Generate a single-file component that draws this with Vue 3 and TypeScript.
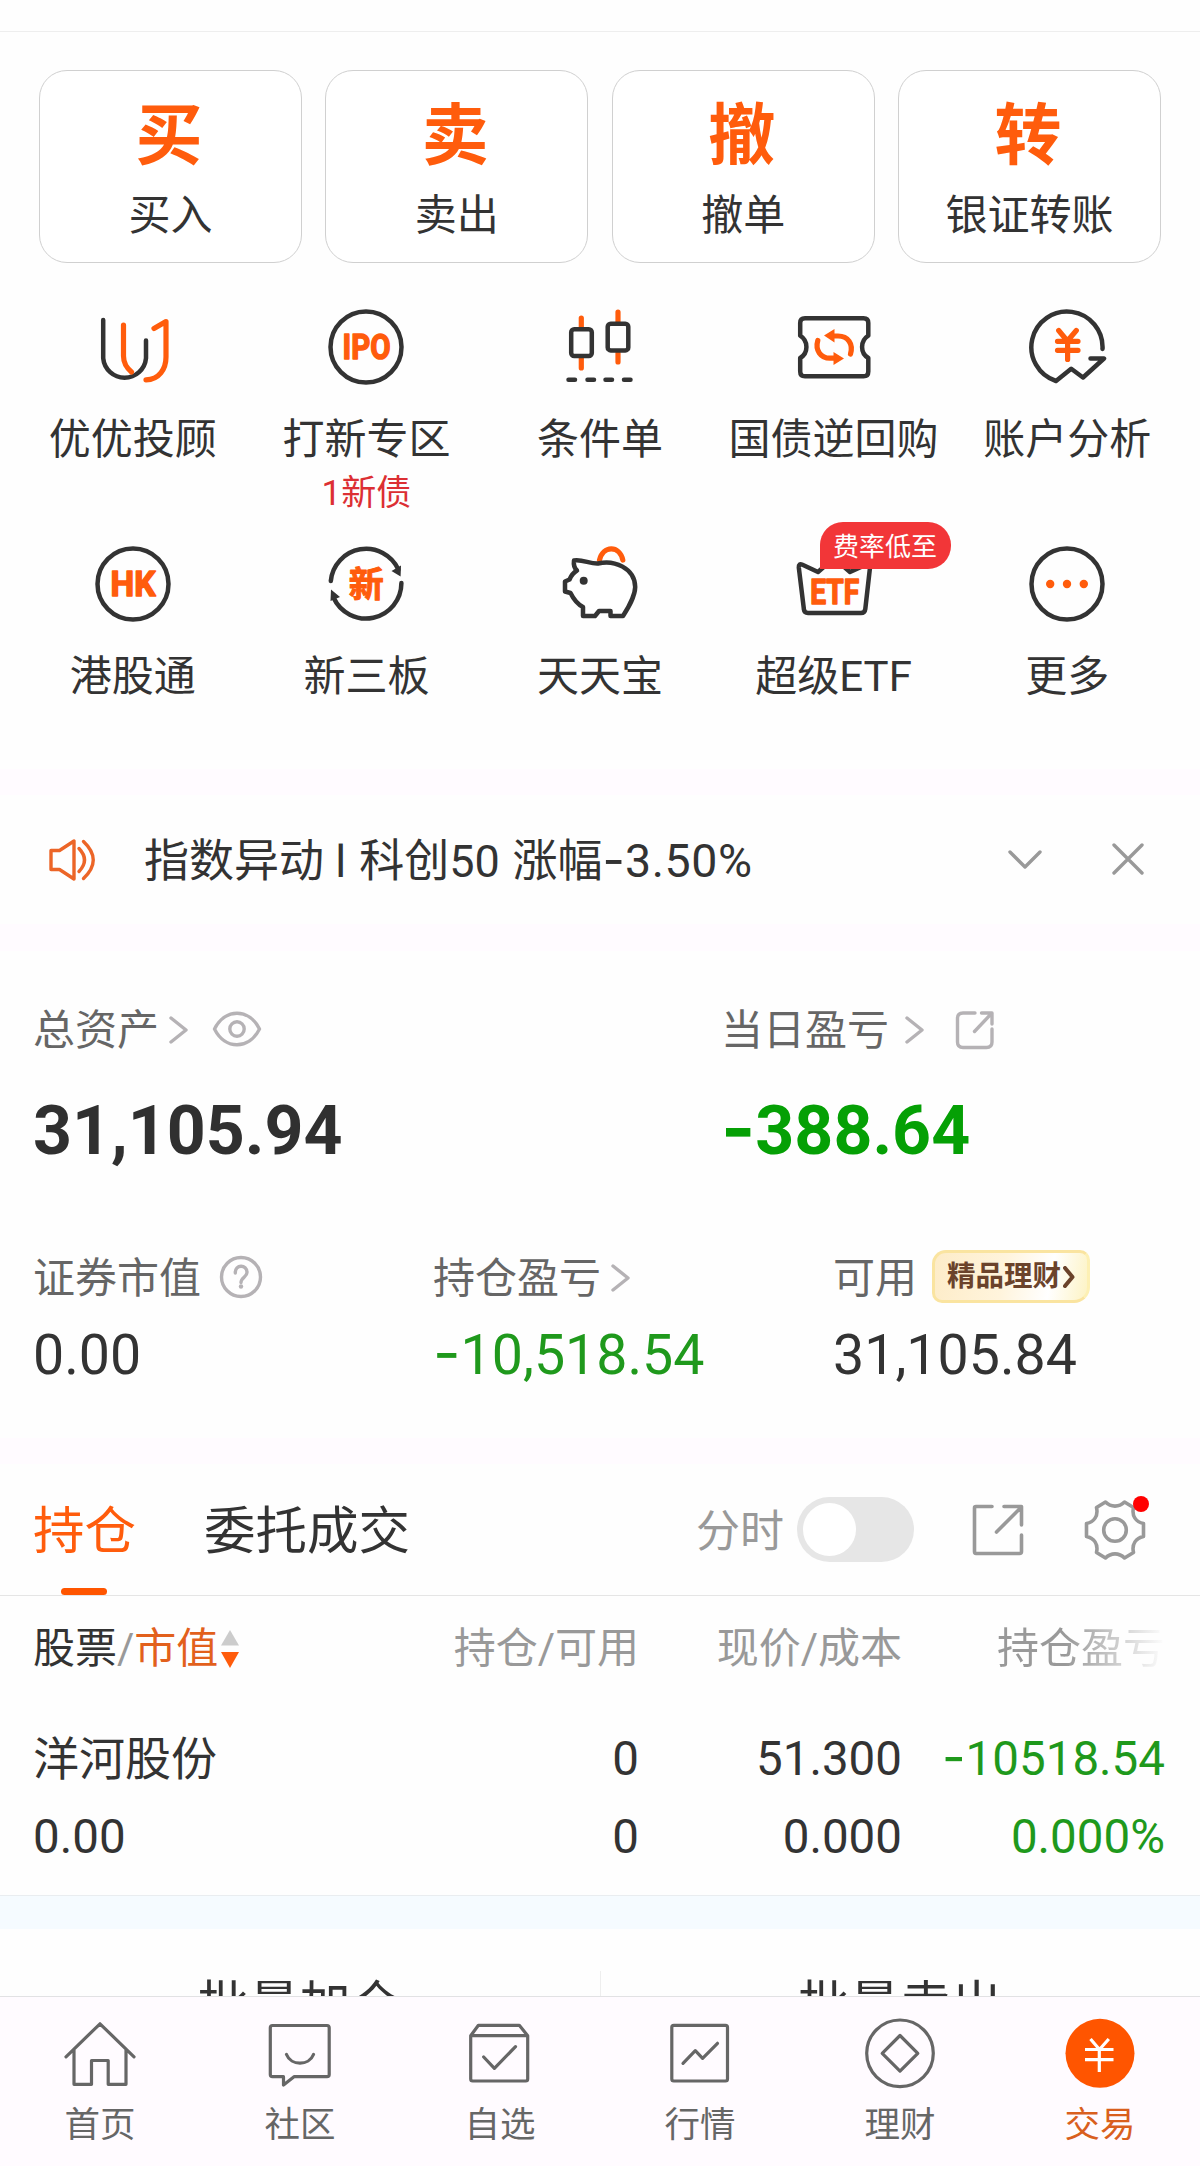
<script setup lang="ts">
interface Action { glyph: string; label: string }
interface Entry { icon: string; label: string; note?: string; badge?: string }
interface NavItem { icon: string; label: string; active?: boolean }

const actions: Action[] = [
  { glyph: '买', label: '买入' },
  { glyph: '卖', label: '卖出' },
  { glyph: '撤', label: '撤单' },
  { glyph: '转', label: '银证转账' },
]

const entries: Entry[] = [
  { icon: 'advisor', label: '优优投顾' },
  { icon: 'ipo', label: '打新专区', note: '1新债' },
  { icon: 'candle', label: '条件单' },
  { icon: 'repo', label: '国债逆回购' },
  { icon: 'analysis', label: '账户分析' },
  { icon: 'hk', label: '港股通' },
  { icon: 'neeq', label: '新三板' },
  { icon: 'pig', label: '天天宝' },
  { icon: 'etf', label: '超级ETF', badge: '费率低至' },
  { icon: 'more', label: '更多' },
]

const navItems: NavItem[] = [
  { icon: 'home', label: '首页' },
  { icon: 'community', label: '社区' },
  { icon: 'watchlist', label: '自选' },
  { icon: 'market', label: '行情' },
  { icon: 'wealth', label: '理财' },
  { icon: 'trade', label: '交易', active: true },
]
</script>

<template>
  <div class="page">
    <section class="functions">
      <div class="actions">
        <button v-for="a in actions" :key="a.label" class="action">
          <span class="action-glyph">{{ a.glyph }}</span>
          <span class="action-label">{{ a.label }}</span>
        </button>
      </div>
      <div class="entries">
        <div v-for="e in entries" :key="e.label" class="entry">
          <div class="entry-icon">
            <svg class="ico" viewBox="0 0 80 80" width="80" height="80">
              <template v-if="e.icon === 'advisor'">
                <path class="d" d="M10.2 13V51.3A21.5 21.5 0 0 0 53 51.3V33.5" />
                <path class="o" d="M30.5 18V49C30.5 57 34 61 38.5 65" />
                <path class="o" d="M53 72.8C66 72.8 73 62 73 50V14.5L61 21.5" />
              </template>
              <template v-else-if="e.icon === 'ipo'">
                <circle class="d" cx="40" cy="40" r="35.5" />
                <text class="t" x="40.500" y="52.300" textLength="48" lengthAdjust="spacingAndGlyphs">IPO</text>
              </template>
              <template v-else-if="e.icon === 'candle'">
                <path class="o" d="M21.3 11V20M21.3 51V61M58 5V15M58 46V55" />
                <rect class="d" x="11.2" y="22.3" width="20.6" height="26.7" rx="3" />
                <rect class="d" x="47.7" y="16.7" width="20.6" height="26.7" rx="3" />
                <path class="d" d="M8.5 72.7H15M27.5 72.7H34M45.5 72.7H52M64 72.7H70.5" />
              </template>
              <template v-else-if="e.icon === 'repo'">
                <path class="d" d="M11 11.3H69.5Q74.3 11.3 74.3 16V28.7C66 34 66 46 74.3 51V64.5Q74.3 69.3 69.5 69.3H11Q6.2 69.3 6.2 64.5V51C14.5 46 14.5 34 6.2 28.7V16Q6.2 11.3 11 11.3Z" />
                <path class="o" d="M56.5 47C59.5 37 54 29 44 29H38M23.8 33.5C21 43 26.5 51.2 36 51.2H42" />
                <path class="of" d="M30 28.6L40.5 22V35.4ZM50 51.5L39.5 45V58Z" />
              </template>
              <template v-else-if="e.icon === 'analysis'">
                <path class="d" d="M75.5 42A35.6 35.6 0 1 0 29 74L44.2 61.8L56 70.5L77 51.5H63.5" />
                <path class="o" d="M31.7 23.5L40.4 34L49.3 23.5M30.5 34.3H51M30.5 43.3H51M40.6 34V52.5" />
              </template>
              <template v-else-if="e.icon === 'hk'">
                <circle class="d" cx="40" cy="40" r="35.5" />
                <text class="t" x="40" y="52.300" textLength="45" lengthAdjust="spacingAndGlyphs">HK</text>
              </template>
              <template v-else-if="e.icon === 'neeq'">
                <path class="d" d="M4.8 37A35.5 35.5 0 0 1 72.4 25.5M75.4 39A35.5 35.5 0 0 1 7.5 53.5" />
                <path class="df" d="M65.5 27L75 21.5L74.6 32.5ZM5 45.5L14 53L4.5 57Z" />
                <text class="t cjk" x="40.300" y="52.5">新</text>
              </template>
              <template v-else-if="e.icon === 'pig'">
                <path class="o" d="M39.5 16C43 1.5 59.5 1 62.8 16" />
                <path class="d" fill="#fff" d="M14 16.5C22 15 30 20 38 19.5C54 15.500 75 24 75.2 43C75 53 68 64 63 72H50.500V67H39L35 72H23V63C17 60 13 54 10.500 49L5 47.500V37.500L9.500 35.500C11 32 13.500 28.500 17 26.500C14 24 13.500 20 14 16.500Z" />
                <circle class="df" cx="23.7" cy="36.7" r="4" />
              </template>
              <template v-else-if="e.icon === 'etf'">
                <path class="d" d="M9.800 64.500L4.800 23.500Q4.500 19 8.500 20.800L24 28L40 14L56 28L72 20.800Q76.500 19 76 23.500L71.300 65Q70.800 69 67 69H14Q10.300 69 9.800 65Z" />
                <text class="t" x="40.700" y="59.700" textLength="49" lengthAdjust="spacingAndGlyphs">ETF</text>
              </template>
              <template v-else>
                <circle class="d" cx="40" cy="40" r="35.5" />
                <circle class="of" cx="23.200" cy="40" r="4.200" />
                <circle class="of" cx="40" cy="40" r="4.200" />
                <circle class="of" cx="56.800" cy="40" r="4.200" />
              </template>
            </svg>
            <span v-if="e.badge" class="entry-badge">{{ e.badge }}</span>
          </div>
          <span class="entry-label">{{ e.label }}</span>
          <span v-if="e.note" class="entry-note">{{ e.note }}</span>
        </div>
      </div>
    </section>

    <section class="notice">
      <svg class="speaker" viewBox="0 0 50 44" width="50" height="44">
        <path d="M4 12.500H12.500L27 3V41L12.500 31.500H4ZM32 10.500Q43 22 32 33.500M36.500 3.500Q56 22 36.500 40.500" />
      </svg>
      <span class="notice-text">指数异动 l <span class="code">科创50</span> 涨幅<span class="minus">-</span><span class="rate">3.50%</span></span>
      <svg class="grey notice-down" viewBox="0 0 36 24" width="36" height="24"><path d="M3 4L18 19L33 4" /></svg>
      <svg class="grey notice-close" viewBox="0 0 32 32" width="32" height="32"><path d="M2 2L30 30M30 2L2 30" /></svg>
    </section>

    <section class="assets">
      <div class="assets-top">
        <div class="total">
          <div class="caption">
            <span>总资产</span>
            <svg class="light chev" viewBox="0 0 20 30" width="20" height="30"><path d="M2 3L17 15L2 27" /></svg>
            <svg class="light eye" viewBox="0 0 50 36" width="50" height="36">
              <path d="M2.500 18C13 -3 37 -3 47.500 18C37 39 13 39 2.500 18Z" />
              <circle cx="25" cy="18" r="7.200" />
            </svg>
          </div>
          <strong class="big">31,105.94</strong>
        </div>
        <div class="daily">
          <div class="caption">
            <span>当日盈亏</span>
            <svg class="light chev chev-wide" viewBox="0 0 20 30" width="20" height="30"><path d="M2 3L17 15L2 27" /></svg>
            <svg class="light share-sm" viewBox="0 0 40 40" width="40" height="40">
              <path d="M20 3H8Q2.500 3 2.500 8.500V32Q2.500 37.500 8 37.500H31.500Q37 37.500 37 32V19M19.500 21.500L36 4M26.500 3H37V14" />
            </svg>
          </div>
          <strong class="big green-strong"><span class="minus">-</span>388.64</strong>
        </div>
      </div>
      <div class="assets-bottom">
        <div class="metric">
          <div class="caption">
            <span>证券市值</span>
            <svg class="light help" viewBox="0 0 44 44" width="44" height="44">
              <circle cx="22" cy="22" r="19.500" />
              <path d="M16.300 18C16 9 28 9 28 17.500C28 22 22 22.500 22 27.500" />
              <circle class="help-dot" cx="22" cy="31.500" r="2.200" />
            </svg>
          </div>
          <span class="value">0.00</span>
        </div>
        <div class="metric">
          <div class="caption">
            <span>持仓盈亏</span>
            <svg class="light chev" viewBox="0 0 20 30" width="20" height="30"><path d="M2 3L17 15L2 27" /></svg>
          </div>
          <span class="value green"><span class="minus">-</span>10,518.54</span>
        </div>
        <div class="metric">
          <div class="caption">
            <span>可用</span>
            <span class="promo">精品理财<svg viewBox="0 0 12 22" width="12" height="22"><path d="M2 2L9.500 11L2 20" /></svg></span>
          </div>
          <span class="value">31,105.84</span>
        </div>
      </div>
    </section>

    <section class="holdings">
      <div class="tabs">
        <span class="tab active">持仓</span>
        <span class="tab">委托成交</span>
        <div class="tools">
          <span class="tool-label">分时</span>
          <span class="switch"><span class="knob"></span></span>
          <svg class="tool share" viewBox="0 0 52 54" width="52" height="54">
            <path d="M20 3.500H4Q2.500 3.500 2.500 5V48.500Q2.500 50.500 4 50.500H47.500Q49.500 50.500 49.500 48.500V32M24.500 29L48.500 5M32 3.500H49.500V22" />
          </svg>
          <span class="gear">
            <svg class="tool" viewBox="0 0 62 62" width="62" height="62">
              <path d="M21.500 3C27 8.500 35 8.500 40.500 3L49.500 8.500C47.500 17 52 23 59.500 24.500V37.500C52 39 47.500 45 49.500 53.500L40.500 59C35 53.500 27 53.500 21.500 59L12.500 53.500C14.500 45 10 39 2.500 37.500V24.500C10 23 14.500 17 12.500 8.500Z" />
              <circle cx="31" cy="31" r="11.300" />
            </svg>
            <i class="dot"></i>
          </span>
        </div>
      </div>

      <div class="table">
        <div class="row head">
          <span class="c1"><b>股票</b>/<em>市值</em>
            <svg class="sort" viewBox="0 0 18 38" width="18" height="38">
              <path fill="#ccc" d="M9 0L18 15.500H0Z" /><path fill="#ff5c0c" d="M0 22H18L9 38Z" />
            </svg>
          </span>
          <span class="c2">持仓/可用</span>
          <span class="c3">现价/成本</span>
          <span class="c4 faded">持仓盈亏</span>
        </div>
        <div class="row first">
          <span class="c1">洋河股份</span>
          <span class="c2">0</span>
          <span class="c3">51.300</span>
          <span class="c4 green"><span class="minus">-</span>10518.54</span>
        </div>
        <div class="row">
          <span class="c1">0.00</span>
          <span class="c2">0</span>
          <span class="c3">0.000</span>
          <span class="c4 green">0.000%</span>
        </div>
      </div>
    </section>

    <section class="batch">
      <span>批量加仓</span>
      <i></i>
      <span>批量卖出</span>
    </section>

    <nav class="nav">
      <div v-for="n in navItems" :key="n.label" class="nav-item" :class="{ on: n.active }">
        <svg viewBox="0 0 80 80" width="80" height="80">
          <template v-if="n.icon === 'home'">
            <path d="M6 43.800L40 10.800L74 43.800M14 37V71.300H31.500V47.500H48.200V71.300H66V37" />
          </template>
          <template v-else-if="n.icon === 'community'">
            <path d="M12.500 12.500H67Q69.200 12.500 69.200 14.700V61.500Q69.200 63.700 67 63.700H34L23.500 72V63.700H12.500Q10.300 63.700 10.300 61.500V14.700Q10.300 12.500 12.500 12.500ZM26.500 41.500C31 53 49 53 53.500 41.500" />
          </template>
          <template v-else-if="n.icon === 'watchlist'">
            <path d="M10.700 22.700L18.400 12.300H59.300L67.700 22.700V66Q67.700 68 65.700 68H12.700Q10.700 68 10.700 66ZM10.700 22.700H67.700M23.700 44L34.400 55.300L55.500 33.700" />
          </template>
          <template v-else-if="n.icon === 'market'">
            <rect x="11.800" y="12.300" width="55.700" height="55.700" rx="2" />
            <path d="M23 50.300L35.300 37.700L42.600 45.300L57.500 30.300" />
          </template>
          <template v-else-if="n.icon === 'wealth'">
            <circle cx="40" cy="40.300" r="33.300" />
            <path d="M40 22.500L57.800 40.300L40 58.100L22.200 40.300Z" />
          </template>
          <template v-else>
            <circle class="coin" cx="40" cy="40.300" r="34.500" />
            <path class="yen" d="M30.500 26L39.500 36.500L48.800 26M25 36.500H53.500M25 46.700H53.500M39.300 36.500V59" />
          </template>
        </svg>
        <span>{{ n.label }}</span>
      </div>
    </nav>
  </div>
</template>

<style>
html, body { margin: 0; background: #fffbff; }
</style>

<style scoped>
.page {
  width: 1200px;
  height: 2166px;
  overflow: hidden;
  display: flex;
  flex-direction: column;
  background: #fffbff;
  color: #333;
  font-family: Roboto, "Noto Sans CJK SC", sans-serif;
  box-sizing: border-box;
}
.page *, .page { box-sizing: border-box; }
i, em, b { font-style: normal; font-weight: 400; }
svg { display: block; flex: none; fill: none; stroke-linecap: round; stroke-linejoin: round; }
section { background: #fefefe; flex: none; }
.minus { font-family: Inter, sans-serif; font-size: 1.08em; line-height: 0; }

/* Quick actions */
.functions { height: 738px; margin-top: 31px; border-top: 1px solid #eee; box-shadow: 0 -31px 0 #fefefe; }
.actions { display: flex; gap: 23.300px; padding: 38px 39px 0; }
.action {
  flex: 1;
  height: 193px;
  padding: 31px 0 0;
  border: 1px solid #d0d0d0;
  border-radius: 28px;
  background: #fff;
  color: #333;
  font-family: inherit;
  display: flex;
  flex-direction: column;
  align-items: center;
}
.action-glyph { margin-right: 3px; font-size: 67px; line-height: 68px; font-weight: 700; color: #ff5c0c; }
.action-label { margin-top: 16px; font-size: 42px; line-height: 60px; }

.entries {
  display: grid;
  grid-template-columns: repeat(5, 1fr);
  grid-template-rows: 237px 225px;
  margin: 44px 16px 0;
}
.entry { display: flex; flex-direction: column; align-items: center; white-space: nowrap; }
.entry-icon { position: relative; }
.entry-label { margin-top: 23px; font-size: 42px; line-height: 60px; }
.entry-note { margin-top: 3px; font-size: 35px; line-height: 42px; color: #dc2f33; }
.entry-badge {
  position: absolute;
  left: 26px;
  top: -22px;
  width: 131px;
  height: 47px;
  border-radius: 23px 23px 23px 0;
  background: #f23638;
  color: #fff;
  font-size: 26px;
  line-height: 50px;
  text-align: center;
}
.d { stroke: #333; stroke-width: 4.500; }
.df { fill: #333; }
.o { stroke: #ff5c0c; stroke-width: 5.200; }
.of { fill: #ff5c0c; }
.t {
  fill: #ff5c0c;
  stroke: #ff5c0c;
  stroke-width: 1.500;
  font-size: 34.500px;
  font-weight: 700;
  text-anchor: middle;
}
.t.cjk { font-size: 35px; stroke-width: 1; }

/* Notice strip */
.notice { height: 129px; margin-top: 26px; padding: 2px 56px 0 47px; display: flex; align-items: center; }
.speaker { stroke: #ec6527; stroke-width: 3.400; margin-bottom: 2px; }
.notice-text { margin: 2px 0 0 47px; flex: 1; font-size: 45px; line-height: 60px; white-space: pre; }
.notice-text .code { margin: 0 1.500px 0 2px; }
.notice-text .rate { font-size: 46.500px; letter-spacing: 0.600px; line-height: 0; }
.grey { stroke: #999; stroke-width: 3.400; }
.notice-down { margin: 0 69px 2px 0; }
.notice-close { margin-bottom: 3px; }

/* Asset summary */
.assets { height: 487px; margin-top: 27px; padding: 50px 33px 0; }
.assets-top { display: flex; height: 247px; }
.total { width: 688px; }
.caption { display: flex; align-items: center; height: 60px; font-size: 42px; line-height: 60px; color: #666; white-space: nowrap; }
.light { stroke: #b5b2b5; stroke-width: 3.400; }
.chev { margin: 0 0 2px 10px; }
.chev-wide { margin-left: 16px; }
.eye { margin: 0 0 5px 23px; }
.share-sm { margin: 0 0 3px 30px; }
.help { margin: 0 0 5px 18px; }
.help-dot { fill: #b5b2b5; stroke: none; }
.big { display: block; margin-top: 30px; font-size: 68px; line-height: 80px; font-weight: 700; color: #303030; }
.big.green-strong { color: #05a005; }
.assets-bottom { display: flex; }
.metric { width: 400px; flex: none; }
.metric .caption { margin-top: 1px; }
.value { display: block; margin-top: 12px; font-size: 55.500px; line-height: 70px; }
.green { color: #1f991c; }
.promo {
  margin: 0 0 5px 15px;
  width: 158px;
  height: 53px;
  padding-left: 12px;
  border: 3px solid #fae4a0;
  border-right-color: #fdf0b4;
  border-radius: 14px 10px 16px 10px;
  background: linear-gradient(100deg, #fdecc8 0%, #fff4dc 45%, #fff 75%, #fdf3c4 100%);
  color: #6b432b;
  font-size: 28.500px;
  line-height: 48px;
  font-weight: 700;
  display: flex;
  align-items: center;
}
.promo svg { stroke: #6b432b; stroke-width: 4; margin-left: 2px; }

/* Holdings */
.holdings { height: 432px; margin-top: 26px; border-bottom: 1px solid #e9edf0; }
.tabs { height: 132px; padding: 0 34px; display: flex; align-items: center; border-bottom: 1px solid #e5e5e5; }
.tab { height: 131px; margin-right: 68px; font-size: 51.500px; line-height: 136px; position: relative; left: -1px; }
.tab.active { color: #ff5c0c; }
.tab.active::after {
  content: "";
  position: absolute;
  left: 28px;
  bottom: 0;
  width: 46px;
  height: 7px;
  border-radius: 4px;
  background: #ff5500;
}
.tools { margin-left: auto; display: flex; align-items: center; }
.tool-label { font-size: 44px; color: #999; line-height: 60px; padding-top: 4px; }
.switch { width: 117px; height: 65px; margin-left: 13px; border-radius: 33px; background: #e6e6e6; padding: 6px; }
.knob { display: block; width: 53px; height: 53px; border-radius: 50%; background: #fff; }
.tool { stroke: #999; stroke-width: 3.600; }
.share { margin-left: 58px; }
.gear { margin: 0 20px 0 60px; position: relative; }
.dot { position: absolute; right: -3px; top: -3px; width: 16px; height: 16px; border-radius: 50%; background: #f00; }

.table { padding: 23px 35px 0 33px; }
.row { display: flex; height: 60px; margin-bottom: 18px; font-size: 47.500px; line-height: 60px; text-align: right; white-space: nowrap; }
.row.head { margin-bottom: 50px; font-size: 42px; color: #999; height: 60px; }
.c1 { width: 303px; text-align: left; display: flex; align-items: center; }
.row.first .c1 { font-size: 46px; }
.c2 { width: 303px; }
.c3 { width: 263px; }
.c4 { flex: 1; }
.head b { color: #333; }
.head em { color: #e2601c; }
.sort { margin-left: 3px; }
.faded {
  background: linear-gradient(90deg, #999 0 62%, #fefefe 100%);
  background-clip: text;
  -webkit-background-clip: text;
  color: transparent;
}

/* Batch buttons, partly covered by the tab bar */
.batch {
  height: 100px;
  border-top: 33px solid #f5fbff;
  overflow: hidden;
  display: flex;
  padding-top: 42px;
  font-size: 51px;
  line-height: 70px;
}
.batch span { flex: 1; text-align: center; }
.batch i { width: 1px; background: #eee; }

/* Bottom tab bar */
.nav { height: 170px; flex: none; border-top: 1px solid #e2e2e4; display: flex; }
.nav-item { flex: 1; display: flex; flex-direction: column; align-items: center; padding-top: 16px; color: #666; font-size: 35.500px; line-height: 44px; }
.nav-item svg { stroke: #666; stroke-width: 3.200; }
.nav-item span { margin-top: 10px; }
.nav-item.on { color: #d95f1e; }
.nav-item .coin { fill: #ff5500; stroke: none; }
.nav-item .yen { stroke: #fff; stroke-linecap: butt; }
</style>
